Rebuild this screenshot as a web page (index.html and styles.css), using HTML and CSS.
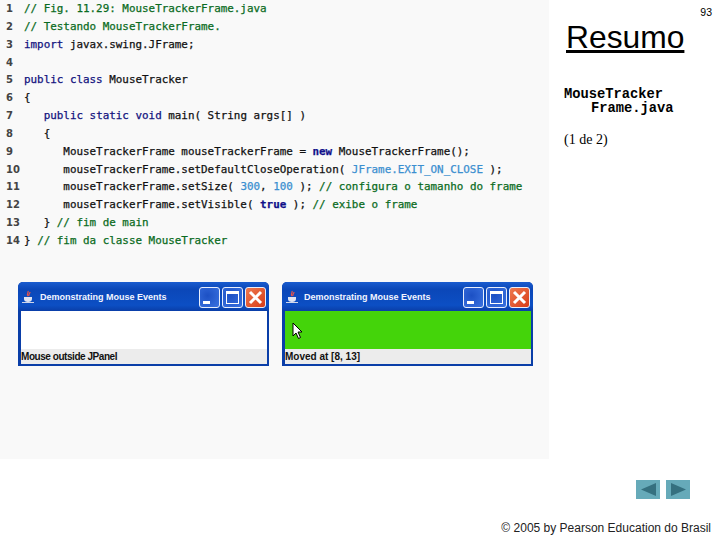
FILE: index.html
```html
<!DOCTYPE html>
<html lang="pt">
<head>
<meta charset="utf-8">
<title>Resumo</title>
<link rel="stylesheet" href="styles.css">
</head>
<body>
<div class="slide">
  <main class="panel">
    <div class="code">
      <div class="row"><span class="num">1</span><span class="c">// Fig. 11.29: MouseTrackerFrame.java</span></div>
      <div class="row"><span class="num">2</span><span class="c">// Testando MouseTrackerFrame.</span></div>
      <div class="row"><span class="num">3</span><span><span class="k">import</span> javax.swing.JFrame;</span></div>
      <div class="row"><span class="num">4</span><span></span></div>
      <div class="row"><span class="num">5</span><span><span class="k">public class</span> MouseTracker</span></div>
      <div class="row"><span class="num">6</span><span>{</span></div>
      <div class="row"><span class="num">7</span><span>   <span class="k">public static void</span> main( String args[] )</span></div>
      <div class="row"><span class="num">8</span><span>   {</span></div>
      <div class="row"><span class="num">9</span><span>      MouseTrackerFrame mouseTrackerFrame = <span class="n">new</span> MouseTrackerFrame();</span></div>
      <div class="row"><span class="num">10</span><span>      mouseTrackerFrame.setDefaultCloseOperation( <span class="k2">JFrame.EXIT_ON_CLOSE</span> );</span></div>
      <div class="row"><span class="num">11</span><span>      mouseTrackerFrame.setSize( <span class="k2">300</span>, <span class="k2">100</span> ); <span class="c">// configura o tamanho do frame</span></span></div>
      <div class="row"><span class="num">12</span><span>      mouseTrackerFrame.setVisible( <span class="n">true</span> ); <span class="c">// exibe o frame</span></span></div>
      <div class="row"><span class="num">13</span><span>   } <span class="c">// fim de main</span></span></div>
      <div class="row"><span class="num">14</span><span>} <span class="c">// fim da classe MouseTracker</span></span></div>
    </div>
    <div class="windows">
      <section class="win">
        <header class="bar">
          <svg class="jicon" width="14" height="14" viewBox="0 0 14 14"><path d="M7 1c1 2-2 3 0 5M9 2c0 2-2 2-1 4" fill="none" stroke="#e5544a" stroke-width="1.2"/><path d="M3 7h8v2c0 2-1.500 3-4 3s-4-1-4-3z" fill="#dfe4f2"/><path d="M1 12.500h12" stroke="#cfd6ea"/></svg>
          <span class="wtitle">Demonstrating Mouse Events</span>
          <span class="btn min"><i></i></span>
          <span class="btn max"><i></i></span>
          <span class="btn close"><svg width="15" height="15" viewBox="0 0 15 15"><path d="M2 2l11 11M13 2L2 13" stroke="#fff" stroke-width="3"/></svg></span>
        </header>
        <div class="content"></div>
        <div class="status tight">Mouse outside JPanel</div>
      </section>
      <section class="win">
        <header class="bar">
          <svg class="jicon" width="14" height="14" viewBox="0 0 14 14"><path d="M7 1c1 2-2 3 0 5M9 2c0 2-2 2-1 4" fill="none" stroke="#e5544a" stroke-width="1.2"/><path d="M3 7h8v2c0 2-1.500 3-4 3s-4-1-4-3z" fill="#dfe4f2"/><path d="M1 12.500h12" stroke="#cfd6ea"/></svg>
          <span class="wtitle">Demonstrating Mouse Events</span>
          <span class="btn min"><i></i></span>
          <span class="btn max"><i></i></span>
          <span class="btn close"><svg width="15" height="15" viewBox="0 0 15 15"><path d="M2 2l11 11M13 2L2 13" stroke="#fff" stroke-width="3"/></svg></span>
        </header>
        <div class="content green">
          <svg class="cursor" width="11" height="17" viewBox="0 0 11 17"><path d="M1 1v13l3-3 2.500 5.500 2-1L6 10h4z" fill="#fff" stroke="#000"/></svg>
        </div>
        <div class="status">Moved at [8, 13]</div>
      </section>
    </div>
  </main>
  <aside class="side">
    <div class="page">93</div>
    <h1 class="title">Resumo</h1>
    <div class="file">MouseTracker<br><span class="indent">Frame.java</span></div>
    <div class="part">(1 de 2)</div>
  </aside>
  <nav class="nav">
    <span class="navbtn"><svg width="24" height="19" viewBox="0 0 24 19"><path d="M5 9.500L20 3V16z" fill="#35707f"/></svg></span>
    <span class="navbtn"><svg width="24" height="19" viewBox="0 0 24 19"><path d="M20 9.500L5 3V16z" fill="#35707f"/></svg></span>
  </nav>
  <footer class="foot">© 2005 by Pearson Education do Brasil</footer>
</div>
</body>
</html>
```
FILE: styles.css
```css
* { box-sizing: border-box; }
html, body { margin: 0; padding: 0; background: #fff; }
.slide {
  width: 720px;
  height: 540px;
  display: grid;
  grid-template-columns: 549px 1fr;
  grid-template-rows: 459px 21px 19px 1fr;
  overflow: hidden;
  color: #000;
}
.panel {
  grid-column: 1;
  grid-row: 1;
  background: #f9f9f9;
}
.code {
  font: 10.9px/17.85px "DejaVu Sans Mono", monospace;
  color: #111;
  -webkit-text-stroke: 0.25px currentColor;
}
.row { display: flex; height: 17.85px; white-space: pre; }
.num {
  width: 24px;
  padding-left: 6px;
  font: bold 10px/17.85px "DejaVu Sans", sans-serif;
  color: #444;
  flex: none;
  -webkit-text-stroke: 0;
}
.c { color: #0a6b22; }
.k { color: #12127e; }
.n { color: #10108a; font-weight: bold; }
.k2 { color: #3b8fd0; }
.windows {
  display: flex;
  gap: 13px;
  padding: 32px 0 0 18px;
}
.win {
  width: 251px;
  height: 84px;
  display: flex;
  flex-direction: column;
  background: #0a3ea8;
  border-radius: 5px 5px 0 0;
  padding: 0 2px 2px 3px;
}
.bar {
  height: 29px;
  flex: none;
  display: flex;
  align-items: center;
  gap: 2px;
  padding: 2px 3px 0 3px;
  margin: 0 -2px 0 -3px;
  background: linear-gradient(#1a5ccf, #0b47b8 25%, #0c4fc4 80%, #0a3ea8);
  border-radius: 5px 5px 0 0;
}
.jicon { margin-right: 3px; flex: none; }
.wtitle {
  flex: 1;
  font: bold 9px "Liberation Sans", sans-serif;
  color: #f2f5ff;
  white-space: nowrap;
}
.btn {
  width: 21px;
  height: 21px;
  flex: none;
  border: 1px solid #e8eefc;
  border-radius: 3px;
  display: flex;
  align-items: center;
  justify-content: center;
  background: radial-gradient(circle at 40% 40%, #1c50c4, #3a72e0);
}
.min i { width: 7px; height: 3px; background: #fff; margin: 11px 6px 0 0; }
.max i { width: 13px; height: 13px; border: 1px solid #fff; border-top-width: 3px; }
.btn.close { background: linear-gradient(135deg, #ee7a50, #d83c18); }
.content { height: 38px; flex: none; background: #fff; padding: 11px 0 0 7px; }
.green { background: #44d40a; }
.cursor { display: block; }
.status {
  flex: 1;
  background: #ececec;
  font: bold 10px/15px "Liberation Sans", sans-serif;
  color: #111;
  white-space: nowrap;
}
.tight { letter-spacing: -0.45px; }
.side {
  grid-column: 2;
  grid-row: 1;
  padding: 5px 0 0 15px;
}
.page {
  font: 10.5px/14px "Liberation Sans", sans-serif;
  text-align: right;
  padding-right: 8px;
}
.title {
  font: normal 31.8px/37px "Liberation Sans", sans-serif;
  margin: 0 0 0 2px;
  text-decoration: underline;
  text-decoration-thickness: 3px;
  text-underline-offset: 2px;
}
.file {
  font: bold 13.75px/14px "Liberation Mono", monospace;
  margin-top: 32px;
}
.indent { margin-left: 27px; }
.part {
  font: 14px/16px "Liberation Serif", serif;
  margin-top: 16px;
}
.nav {
  grid-column: 2;
  grid-row: 3;
  display: flex;
  gap: 6px;
  padding-left: 87px;
}
.navbtn { width: 24px; height: 19px; background: #66aab9; display: block; }
.navbtn svg { display: block; }
.foot {
  grid-column: 1 / -1;
  grid-row: 4;
  font: 12px/14px "Liberation Sans", sans-serif;
  color: #222;
  text-align: right;
  padding: 22px 9px 0 0;
}
```
